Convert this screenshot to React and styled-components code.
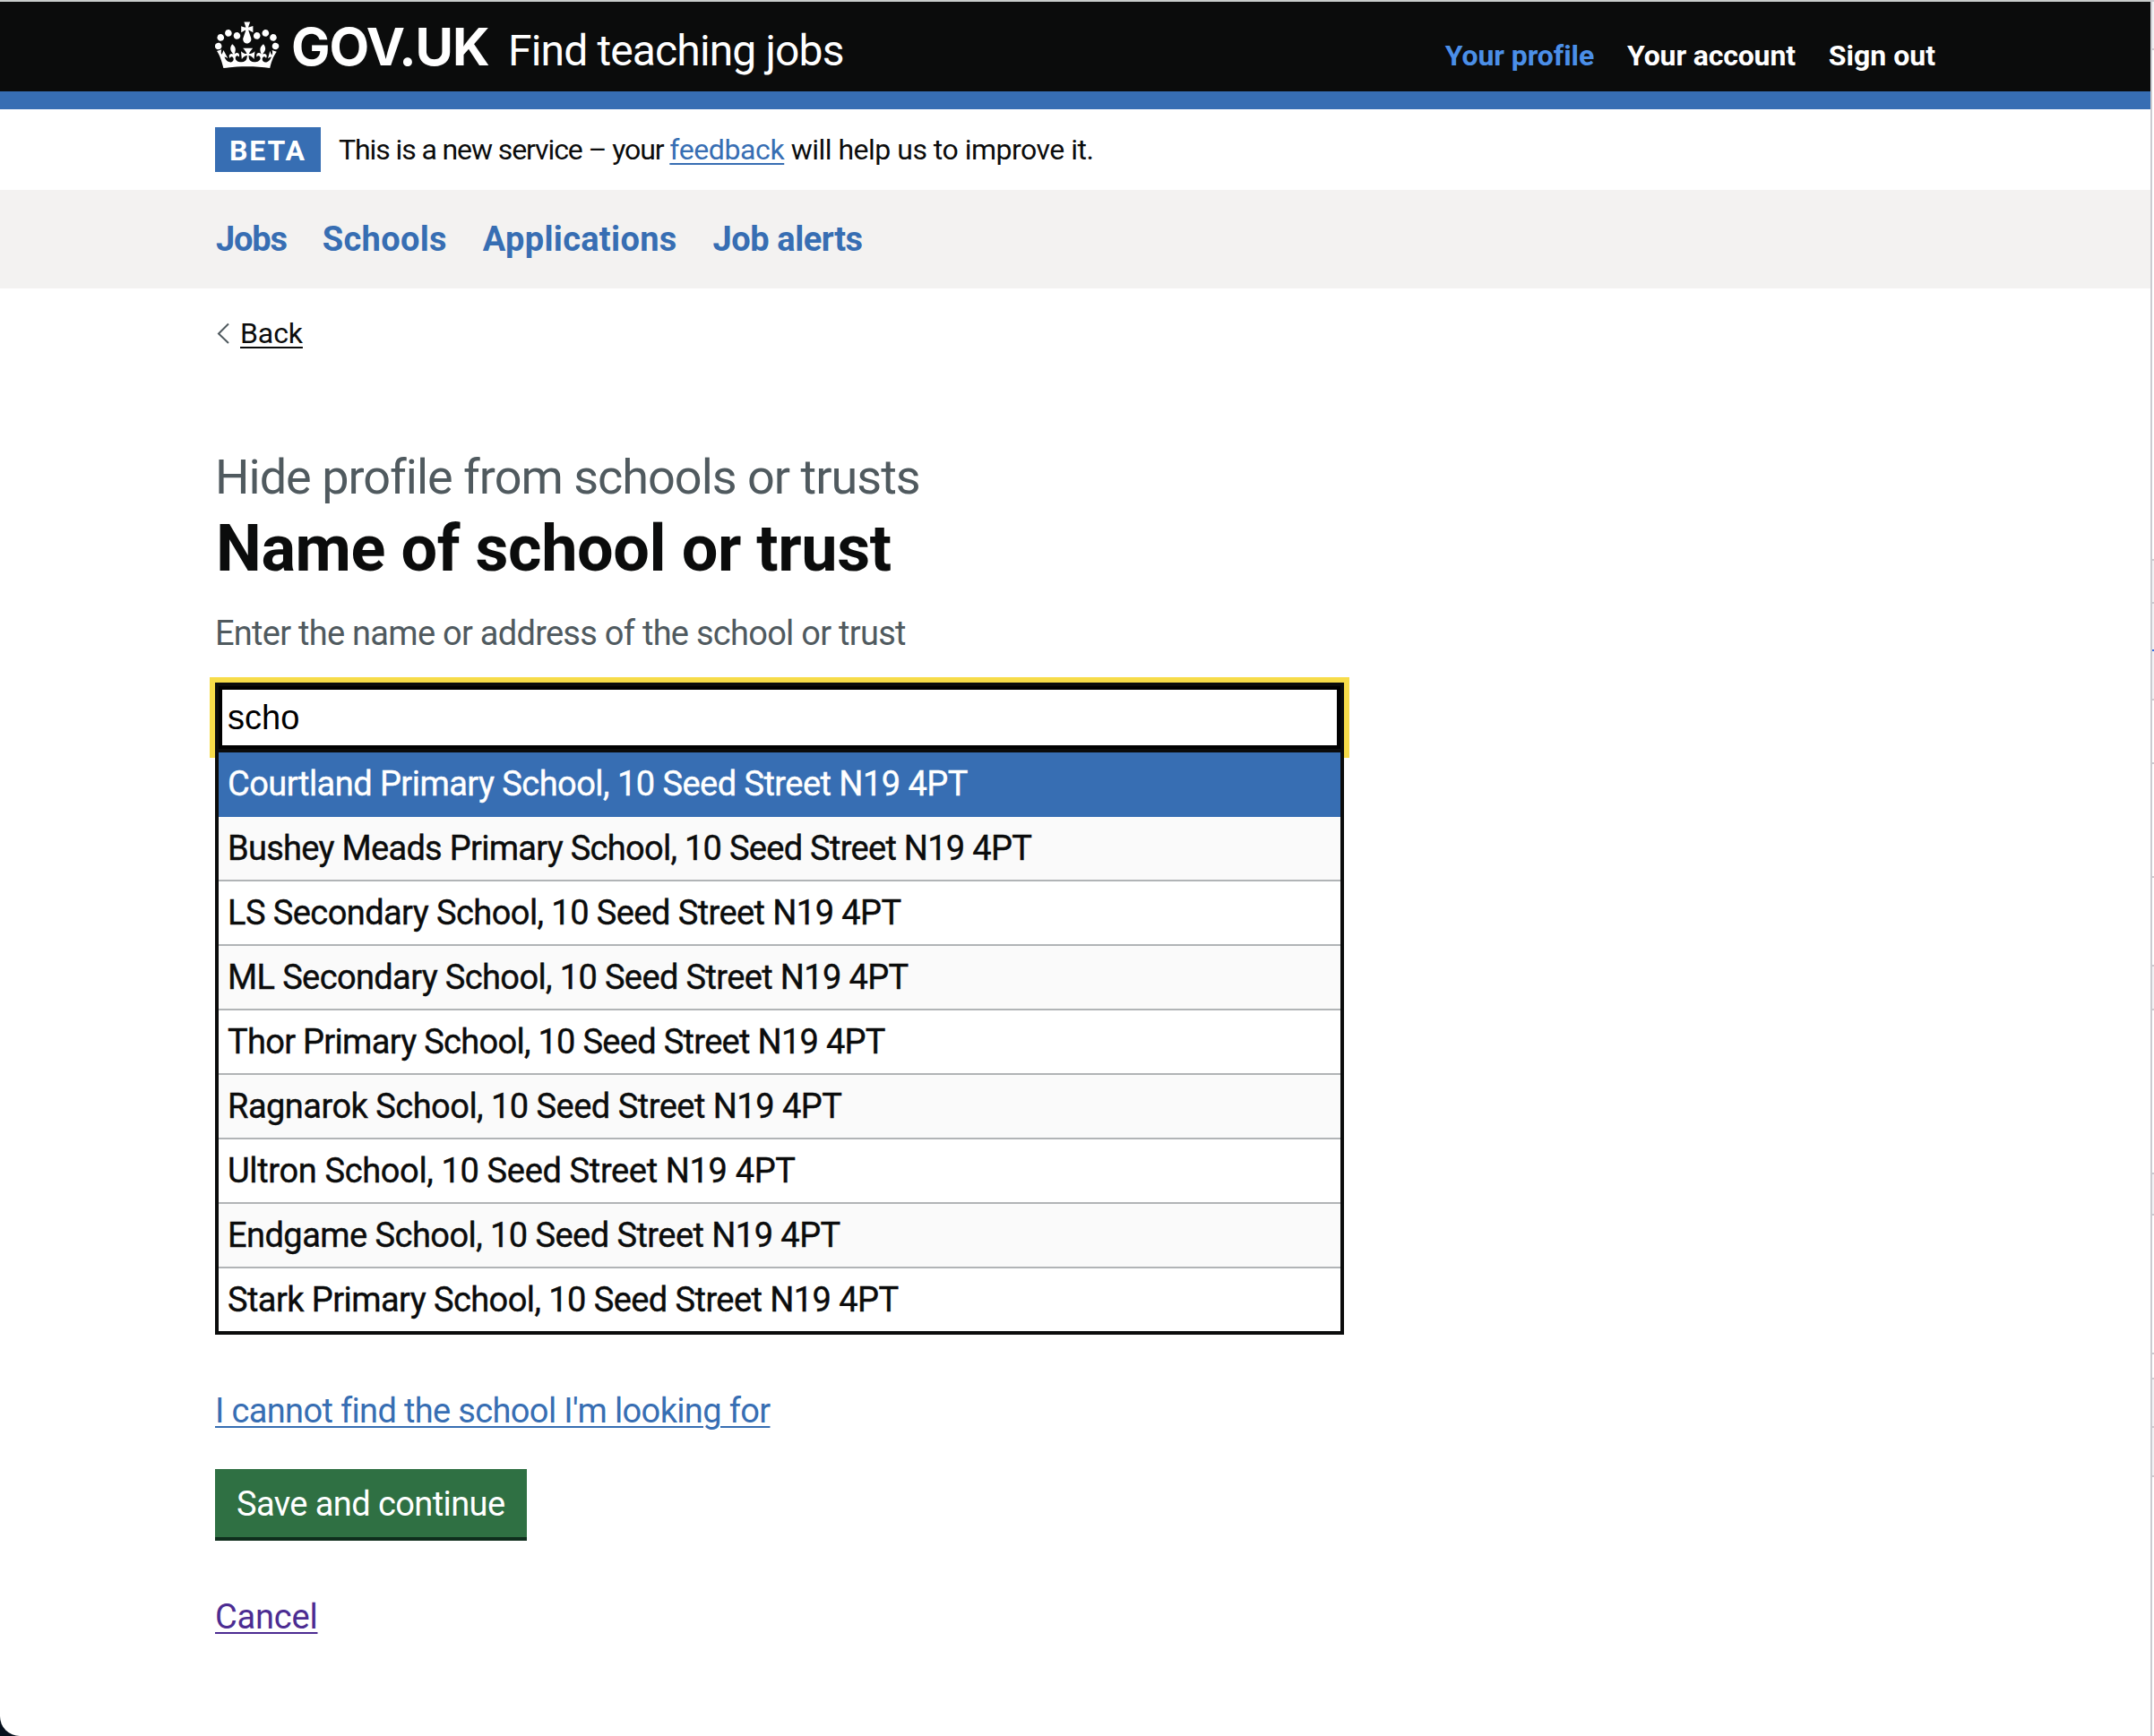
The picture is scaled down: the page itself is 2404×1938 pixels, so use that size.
import React from "react";
import styled, { createGlobalStyle } from "styled-components";

const GlobalStyle = createGlobalStyle`
  * { box-sizing: border-box; }
  body { margin: 0; background: #05101c; }
  #root { font-family: Roboto, "Liberation Sans", sans-serif; color: #0b0c0c; }
`;

const Window = styled.div`
  display: flex;
  width: 2404px;
  height: 1938px;
`;

const Page = styled.div`
  flex: 1;
  border-top: 2px solid #c9cccb;
  border-bottom-left-radius: 22px;
  background: #fff;
  overflow: hidden;
`;

const Header = styled.header`
  display: flex;
  align-items: flex-start;
  height: 120px;
  padding: 0 240px;
  background: #0b0c0c;
  border-bottom: 20px solid #376eb3;
  color: #fff;
`;

const Crown = styled.svg`
  width: 72px;
  height: 64px;
  margin-top: 14px;
  fill: #fff;
`;

const LogoText = styled.span`
  margin: 20px 0 0 13px;
  font: 700 58px/60px Inter, sans-serif;
  letter-spacing: -1.1px;
`;

const ServiceName = styled.span`
  margin: 25px 0 0 21.5px;
  font-size: 48px;
  line-height: 60px;
  letter-spacing: -0.87px;
`;

const AccountNav = styled.nav`
  display: flex;
  gap: 37px;
  margin: 40px 0 0 auto;
`;

const AccountLink = styled.a`
  color: ${(p) => (p.$active ? "#4b8fe8" : "#fff")};
  font-size: 32px;
  font-weight: 700;
  line-height: 40px;
  letter-spacing: ${(p) => p.$track || 0}px;
`;

const PhaseBanner = styled.div`
  display: flex;
  height: 90px;
  padding: 20px 240px;
`;

const Tag = styled.strong`
  width: 118px;
  height: 50px;
  padding-left: 16px;
  background: #376eb3;
  color: #fff;
  font-size: 32px;
  line-height: 52px;
  letter-spacing: 1.9px;
`;

const PhaseText = styled.span`
  margin-left: 20px;
  font-size: 32px;
  line-height: 50px;
  letter-spacing: -0.5px;
`;

const Phrase = styled.span`
  letter-spacing: ${(p) => p.$track}px;
`;

const Link = styled.a`
  color: ${(p) => p.$color || "#376eb3"};
  font-size: ${(p) => p.$size || 38}px;
  letter-spacing: ${(p) => p.$track || 0}px;
  text-decoration: underline;
  text-decoration-thickness: 2px;
  text-underline-offset: ${(p) => p.$offset || 4}px;
`;

const PrimaryNav = styled.nav`
  display: flex;
  gap: 40px;
  height: 110px;
  padding: 0 241px;
  background: #f3f2f1;
`;

const NavLink = styled.a`
  color: #376eb3;
  font-size: 38px;
  font-weight: 700;
  line-height: 111px;
  letter-spacing: ${(p) => p.$track}px;
`;

const Main = styled.main`
  display: flex;
  flex-direction: column;
  align-items: flex-start;
  width: 1260px;
  margin-left: 240px;
  line-height: 51px;
`;

const BackRow = styled.div`
  display: flex;
  align-items: center;
  gap: 12px;
  height: 40px;
  margin-top: 30px;
  line-height: 40px;
`;

const Chevron = styled.svg`
  width: 16px;
  height: 24px;
  fill: none;
  stroke: #505a5f;
  stroke-width: 2;
`;

const Caption = styled.span`
  margin-top: 111px;
  color: #505a5f;
  font-size: 54px;
  line-height: 60px;
  letter-spacing: -1px;
`;

const Heading = styled.h1`
  margin: 10px 0 0;
  padding-left: 1px;
  font-size: 72px;
  font-weight: 700;
  line-height: 80px;
  letter-spacing: -0.41px;
`;

const Hint = styled.p`
  margin: 29px 0;
  color: #505a5f;
  font-size: 38px;
  letter-spacing: -0.73px;
`;

const SearchInput = styled.input`
  width: 1260px;
  height: 78px;
  padding: 0 10px;
  border: 4px solid #0b0c0c;
  border-radius: 0;
  outline: none;
  box-shadow: inset 0 0 0 4px #000, 0 0 0 6px #f7dc49;
  background: #fff;
  color: #000;
  font: 38px "Liberation Sans", sans-serif;
`;

const Menu = styled.ul`
  z-index: 1;
  width: 1260px;
  margin: 0 0 60px;
  padding: 0;
  border: 4px solid #0b0c0c;
  border-top: 0;
  list-style: none;
`;

const Option = styled.li`
  height: 72px;
  padding-left: 10px;
  border-bottom: 2px solid #b1b4b6;
  background: #fff;
  font-size: 38px;
  line-height: 71px;
  -webkit-text-stroke: 0.4px currentColor;
  letter-spacing: ${(p) => p.$track}px;
  &:nth-child(even) { background: #fafafa; }
  &:last-child { height: 70px; border-bottom: 0; }
  &:first-child { background: #376eb3; border-color: #376eb3; color: #fff; }
`;

const SaveButton = styled.button`
  width: 348px;
  height: 80px;
  margin: 39px 0 60px;
  padding: 0 0 0 24px;
  border: 0;
  border-bottom: 4px solid #0f2e1d;
  background: #2f7043;
  color: #fff;
  font: 38px/78px Roboto, sans-serif;
  letter-spacing: -0.59px;
  text-align: left;
`;

const Edge = styled.div`
  display: flex;
  flex-direction: column;
  width: 4px;
  border-left: 2px solid #cbcbd0;
  background: #fff;
`;

const EdgeCell = styled.i`
  flex: none;
  height: ${(p) => p.$h}px;
  border-bottom: 2px solid ${(p) => (p.$accent ? "#376ee0" : "#cbcbd0")};
  background: ${(p) => (p.$shade ? "#f2f2f4" : "#fff")};
`;

const schools = [
  ["Courtland Primary School", -0.54],
  ["Bushey Meads Primary School", -0.71],
  ["LS Secondary School", -0.57],
  ["ML Secondary School", -0.63],
  ["Thor Primary School", -0.7],
  ["Ragnarok School", -0.52],
  ["Ultron School", -0.35],
  ["Endgame School", -0.55],
  ["Stark Primary School", -0.57],
];

/* height, shaded, blue divider */
const edgeCells = [
  [2], [54, true], [570], [48, true], [53, true, true], [55, true], [71], [127],
  [99], [49, true], [183], [46, true], [155], [28], [54, true], [55, true],
];

export default function App() {
  return (
    <Window>
      <GlobalStyle />
      <Page>
        <Header>
          <Crown viewBox="0 0 36 32" aria-hidden="true">
            <path d="M6.7 12.2c1 .4 2.1-.1 2.5-1s-.1-2.1-1-2.5c-1-.4-2.1.1-2.5 1-.4 1 0 2.1 1 2.5m-4.3 2.5c1 .4 2.1-.1 2.5-1s-.1-2.1-1-2.5c-1-.4-2.1.1-2.5 1-.5 1 0 2.1 1 2.5m-1.3 4.8c1 .4 2.1-.1 2.5-1 .4-1-.1-2.1-1-2.5-1-.4-2.1.1-2.5 1-.4 1 0 2.1 1 2.5m10.4-5.8c1 .4 2.1-.1 2.5-1s-.1-2.1-1-2.5c-1-.4-2.1.1-2.5 1s0 2.1 1 2.5m17.4-1.5c-1 .4-2.1-.1-2.5-1s.1-2.1 1-2.5c1-.4 2.1.1 2.5 1 .5 1 0 2.1-1 2.5m4.3 2.5c-1 .4-2.1-.1-2.5-1s.1-2.1 1-2.5c1-.4 2.1.1 2.5 1 .5 1 0 2.1-1 2.5m1.3 4.8c-1 .4-2.1-.1-2.5-1-.4-1 .1-2.1 1-2.5 1-.4 2.1.1 2.5 1 .4 1 0 2.1-1 2.5m-10.4-5.8c-1 .4-2.1-.1-2.5-1s.1-2.1 1-2.5c1-.4 2.1.1 2.5 1s0 2.1-1 2.5m-5.3-4.9 2.4 1.3V6.5l-2.4.8c-.1-.1-.1-.1-.2-.1s1-3 1-3h-3.4l1 3c-.1.1-.2.1-.2.1-.1.1-2.4-.7-2.4-.7v3.5L17 8.8c-.1.1 0 .2.1.3l-1.4 4.2c-.1.2-.1.4-.1.7 0 1.1.8 2.1 1.9 2.2h.8c1.1-.2 1.9-1.1 1.9-2.2 0-.2-.1-.4-.1-.7l-1.4-4.2c.1-.1.1-.2.1-.3m-1 20.3c4.6 0 8.9.3 12.8.9 1.1-4.6 2.4-7.2 3.8-9.1l-2.6-.9c.3 1.3.3 1.9 0 2.8-.4-.4-.8-1.2-1.1-2.4l-1.2 4.2c.8-.5 1.3-.9 2-.9-1.2 2.6-2.6 3.2-3.6 3-1.1-.2-1.7-1.2-1.5-2.1.3-1.2 1.5-1.5 2.1-.1 1.1-2.3-.7-3-2-2.3 1.9-1.9 2.1-3.6.5-5.6-2.1 1.6-2.2 3.2-1.2 5.6-1.3-1.4-3.3-.7-2.5 1.6.9-1.4 2.1-.5 2 .9-.2 1.1-1.7 2-3.6 1.9-2.7-.2-2.9-2.1-2.9-3.6.7-.1 1.9.5 3 2l.4-4.4c-1.1 1.2-2.2 1.4-3.2 1.4.4-1.2 2.1-3.1 2.1-3.1h-5.5s1.8 1.9 2.1 3.1c-1.1 0-2.1-.3-3.2-1.4l.4 4.4c1.1-1.5 2.3-2.1 3-2-.1 1.6-.2 3.4-2.9 3.6-1.9.2-3.4-.8-3.6-1.9-.2-1.4 1-2.2 2-.9.7-2.3-1.3-3-2.6-1.6 1-2.4.9-4-1.2-5.6-1.5 2-1.3 3.7.6 5.6-1.3-.7-3.1 0-2 2.3.6-1.4 1.8-1.1 2.1.1.2.9-.4 1.9-1.5 2.1-1 .1-2.5-.5-3.6-3 .7 0 1.2.4 2 .9L4.7 20c-.3 1.2-.7 1.9-1.1 2.4-.3-.9-.3-1.5 0-2.8l-2.6.9c1.4 1.9 2.6 4.9 3.7 9.5 4-.6 8.5-.9 13.1-.9" />
          </Crown>
          <LogoText>GOV.UK</LogoText>
          <ServiceName>Find teaching jobs</ServiceName>
          <AccountNav>
            <AccountLink $active $track={-0.1}>Your profile</AccountLink>
            <AccountLink $track={-0.16}>Your account</AccountLink>
            <AccountLink>Sign out</AccountLink>
          </AccountNav>
        </Header>
        <PhaseBanner>
          <Tag>BETA</Tag>
          <PhaseText>
            <Phrase $track={-1.1}>This is a new service – your </Phrase>
            <Link $size={32} $track={-0.4}>feedback</Link> will help us to improve it.
          </PhaseText>
        </PhaseBanner>
        <PrimaryNav>
          <NavLink $track={-1.2}>Jobs</NavLink>
          <NavLink $track={0.3}>Schools</NavLink>
          <NavLink $track={0.3}>Applications</NavLink>
          <NavLink $track={-0.45}>Job alerts</NavLink>
        </PrimaryNav>
        <Main>
          <BackRow>
            <Chevron viewBox="0 0 16 24" aria-hidden="true">
              <path d="M15 1.5 4 12.5l11 10.5" />
            </Chevron>
            <Link $size={32} $color="#0b0c0c" $track={-0.1}>Back</Link>
          </BackRow>
          <Caption>Hide profile from schools or trusts</Caption>
          <Heading>Name of school or trust</Heading>
          <Hint>Enter the name or address of the school or trust</Hint>
          <SearchInput defaultValue="scho" />
          <Menu>
            {schools.map(([name, track]) => (
              <Option key={name} $track={track}>{name}, 10 Seed Street N19 4PT</Option>
            ))}
          </Menu>
          <Link $track={-0.65}>I cannot find the school I'm looking for</Link>
          <SaveButton>Save and continue</SaveButton>
          <Link $color="#4c2c92" $track={-0.2}>Cancel</Link>
        </Main>
      </Page>
      <Edge>
        {edgeCells.map(([h, shade, accent], i) => (
          <EdgeCell key={i} $h={h} $shade={shade} $accent={accent} />
        ))}
      </Edge>
    </Window>
  );
}
